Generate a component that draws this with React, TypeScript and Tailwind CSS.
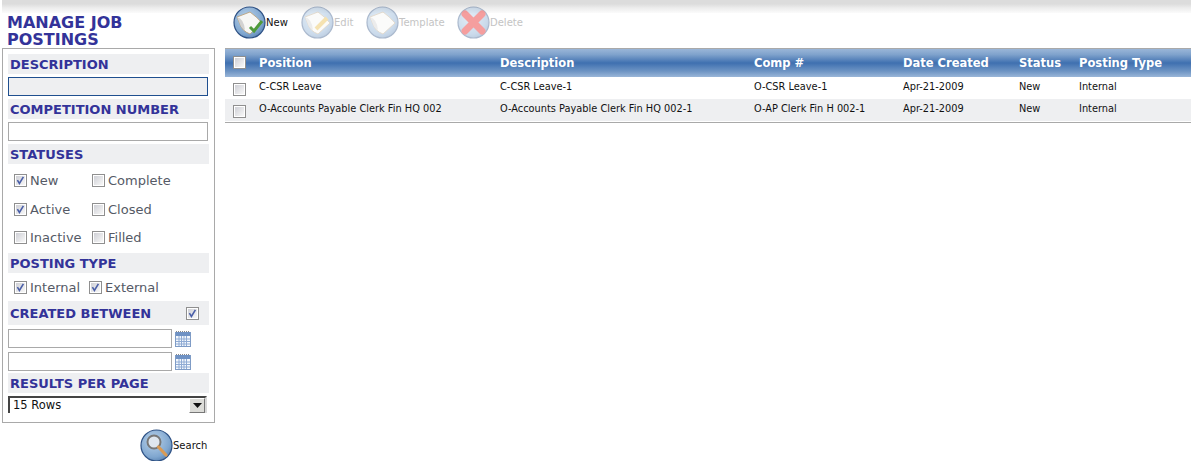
import React from "react";

function Check({ on }: { on?: boolean }) {
  return (
    <span className="inline-block shrink-0 w-[13px] h-[13px]">
      <svg width="13" height="13" viewBox="0 0 13 13" className="block">
        <defs>
          <linearGradient id="cbf" x1="0" y1="0" x2="1" y2="1">
            <stop offset="0" stopColor="#cfd0d6" />
            <stop offset="1" stopColor="#f8f8f8" />
          </linearGradient>
        </defs>
        <rect x="0.5" y="0.5" width="12" height="12" fill="#ffffff" stroke="#8f8f8f" />
        <rect x="2" y="2" width="9" height="9" fill="url(#cbf)" />
        {on && <path d="M3.4 6.2 L5.4 9.4 L9.4 2.8" fill="none" stroke="#4a5fa8" strokeWidth="1.6" />}
      </svg>
    </span>
  );
}

function Head({ children, right, h = "h-5" }: { children: React.ReactNode; right?: React.ReactNode; h?: string }) {
  return (
    <div className={`${h} bg-[#eeeff1] flex items-center justify-between pl-[2px] pr-[10px] text-[13px] leading-none font-bold text-[#333399]`}>
      <span>{children}</span>
      {right}
    </div>
  );
}

function Opt({ label, on, w }: { label: string; on?: boolean; w: string }) {
  return (
    <label className={`flex items-center gap-[3px] ${w}`}>
      <Check on={on} />
      <span className="text-[13px] leading-none text-[#555a66]">{label}</span>
    </label>
  );
}

function Calendar() {
  return (
    <svg width="16" height="16" viewBox="0 0 16 16" className="block shrink-0">
      <rect x="0.5" y="1.5" width="15" height="14" fill="#f4f8fd" stroke="#7f9cc6" />
      <rect x="1" y="1" width="14" height="4" fill="#6f92c4" />
      <path d="M1 0.5h14" stroke="#8a8a8a" strokeDasharray="1 1" />
      <path d="M1 8h14M1 10.5h14M1 13h14M4 5v10M6.5 5v10M9 5v10M11.5 5v10" stroke="#8fabd4" strokeWidth="1" />
    </svg>
  );
}

function Orb({ id, dim, children }: { id: string; dim?: boolean; children: React.ReactNode }) {
  return (
    <svg width="33" height="33" viewBox="0 0 33 33" className={`block shrink-0 ${dim ? "opacity-40" : ""}`}>
      <defs>
        <radialGradient id={id} cx="0.4" cy="0.35" r="0.75">
          <stop offset="0" stopColor="#b9d2ea" />
          <stop offset="0.7" stopColor="#7fa6cf" />
          <stop offset="1" stopColor="#4f79ab" />
        </radialGradient>
      </defs>
      <circle cx="16.5" cy="16.5" r="15.5" fill={`url(#${id})`} stroke="#2f5285" strokeWidth="1.2" />
      {children}
    </svg>
  );
}

const Paper = () => (
  <>
    <path d="M4 11 L17 6 Q24 11 29 17 L17 28 Q9 25 7 18 Z" fill="#f7f7f5" stroke="#b89a70" strokeWidth="0.8" />
    <path d="M4 11 Q11 13 12 24 Q8 22 7 18 Z" fill="#d2d2d2" />
  </>
);

function Tool({ id, label, dim, pad, children }: { id: string; label: string; dim?: boolean; pad: string; children: React.ReactNode }) {
  return (
    <div className={`flex items-center ${pad}`}>
      <Orb id={id} dim={dim}>{children}</Orb>
      <span className={`text-[10px] leading-none ${dim ? "text-[#c4c4c4]" : "text-[#111111]"}`}>{label}</span>
    </div>
  );
}

const gridCols = "grid grid-cols-[34px_241px_254px_149px_116px_60px_1fr] items-center";

function Row({ alt, cells }: { alt?: boolean; cells: string[] }) {
  return (
    <div className={`${gridCols} h-[22px] ${alt ? "bg-[#eeeff1]" : "bg-white"} text-[9.8px] leading-none text-[#111111]`}>
      <div className="pl-[8px] pt-[5px]"><Check /></div>
      {cells.map((c, i) => (
        <div key={i} className="pb-[3px] whitespace-nowrap">{c}</div>
      ))}
    </div>
  );
}

export default function App() {
  return (
    <div className="w-[1191px] h-[461px] bg-white overflow-hidden font-['DejaVu_Sans','Liberation_Sans',sans-serif]">
      <div className="ml-[2px] h-[13px] bg-[linear-gradient(#dcdcdc_0%,#dcdcdc_30%,#ececec_60%,#fbfbfb_100%)]" />
      <div className="flex">
        <div className="w-[225px] shrink-0">
          <h1 className="pl-[7px] pt-[1px] h-[35px] text-[16px] leading-[17px] font-bold text-[#333399] w-[170px]">
            MANAGE JOB POSTINGS
          </h1>
          <div className="ml-[2px] w-[213px] h-[375px] border border-[#a9a9a9] px-[5px] pt-[5px]">
            <Head>DESCRIPTION</Head>
            <div className="h-[19px] mt-[3px] mr-[1px] border border-[#1f4f8f] bg-[#eeeff1]" />
            <div className="mt-[3px]"><Head>COMPETITION NUMBER</Head></div>
            <div className="h-[19px] mt-[3px] mr-[1px] border border-[#a9a9a9] bg-white" />
            <div className="mt-[3px]"><Head>STATUSES</Head></div>
            <div className="pl-[6px] pt-[10px] h-[89px] flex flex-col">
              <div className="flex"><Opt label="New" on w="w-[78px]" /><Opt label="Complete" w="w-[100px]" /></div>
              <div className="flex mt-[16px]"><Opt label="Active" on w="w-[78px]" /><Opt label="Closed" w="w-[100px]" /></div>
              <div className="flex mt-[15px]"><Opt label="Inactive" w="w-[78px]" /><Opt label="Filled" w="w-[100px]" /></div>
            </div>
            <Head>POSTING TYPE</Head>
            <div className="pl-[6px] h-[28px] flex items-center">
              <Opt label="Internal" on w="w-[75px]" /><Opt label="External" on w="w-[90px]" />
            </div>
            <Head h="h-6" right={<Check on />}>CREATED BETWEEN</Head>
            <div className="mt-[4px] flex items-center gap-[3px]">
              <div className="w-[164px] h-[19px] border border-[#a9a9a9]" /><Calendar />
            </div>
            <div className="mt-[4px] flex items-center gap-[3px]">
              <div className="w-[164px] h-[19px] border border-[#a9a9a9]" /><Calendar />
            </div>
            <div className="mt-[2px]"><Head>RESULTS PER PAGE</Head></div>
            <div className="mt-[3px] mr-[2px] h-[17px] border-2 border-b-0 border-r-[#d8d8d8] border-t-[#444444] border-l-[#444444] flex justify-between items-center pl-[3px]">
              <span className="text-[11.5px] leading-none text-[#111111]">15 Rows</span>
              <span className="w-[16px] h-[15px] bg-[#dcdcd8] border border-[#777777] border-t-white border-l-white flex items-center justify-center">
                <svg width="9" height="5" viewBox="0 0 9 5" className="block"><path d="M0 0h9L4.5 5z" fill="#111111" /></svg>
              </span>
            </div>
          </div>
          <div className="mt-[6px] ml-[140px] flex items-center">
            <Orb id="orbS">
              <circle cx="14" cy="13" r="6.5" fill="#dfe6ee" stroke="#777777" strokeWidth="2" />
              <path d="M18.5 18 L26 26" stroke="#d99a55" strokeWidth="3.2" strokeLinecap="round" />
            </Orb>
            <span className="text-[10px] leading-none text-[#111111]">Search</span>
          </div>
        </div>
        <div className="flex-1 min-w-0">
          <div className="h-[35px] -mt-[8px] flex items-center pl-[8px]">
            <Tool id="orbN" label="New" pad="w-[68px]">
              <Paper />
              <path d="M17 21 L21 25 L29 15" fill="none" stroke="#4f9a3a" strokeWidth="3" />
            </Tool>
            <Tool id="orbE" label="Edit" dim pad="w-[65px]">
              <Paper />
              <path d="M15 23 L26 12" stroke="#e8b93f" strokeWidth="4" />
            </Tool>
            <Tool id="orbT" label="Template" dim pad="w-[91px]">
              <Paper />
            </Tool>
            <Tool id="orbD" label="Delete" dim pad="w-[70px]">
              <path d="M8 8 L25 25 M25 8 L8 25" stroke="#e81010" strokeWidth="7" strokeLinecap="round" />
            </Tool>
          </div>
          <div className="mt-[8px] border-y border-[#a9a9a9] bg-white h-[75px]">
            <div className={`${gridCols} h-[28px] pt-[2px] bg-[linear-gradient(#9ab6d8_0%,#7fa2cc_20%,#3f70b0_50%,#6f95c4_80%,#9ab6d8_100%)] text-[11.5px] leading-none font-bold text-white`}>
              <div className="pl-[8px]"><Check /></div>
              <div>Position</div>
              <div>Description</div>
              <div>Comp #</div>
              <div>Date Created</div>
              <div>Status</div>
              <div>Posting Type</div>
            </div>
            <Row cells={["C-CSR Leave", "C-CSR Leave-1", "O-CSR Leave-1", "Apr-21-2009", "New", "Internal"]} />
            <Row alt cells={["O-Accounts Payable Clerk Fin HQ 002", "O-Accounts Payable Clerk Fin HQ 002-1", "O-AP Clerk Fin H 002-1", "Apr-21-2009", "New", "Internal"]} />
          </div>
        </div>
      </div>
    </div>
  );
}
